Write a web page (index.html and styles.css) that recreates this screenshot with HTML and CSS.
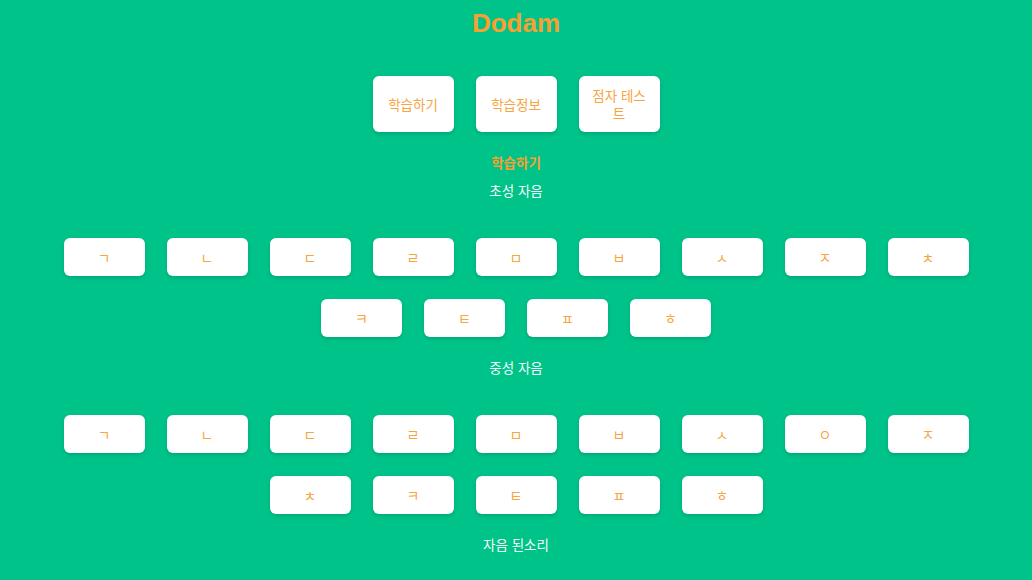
FILE: index.html
```html
<!DOCTYPE html>
<html lang="ko">
<head>
<meta charset="utf-8">
<title>Dodam</title>
<link rel="stylesheet" href="styles.css">
</head>
<body>
<h1 class="title">Dodam</h1>
<nav class="nav">
  <button class="nav-btn">학습하기</button>
  <button class="nav-btn">학습정보</button>
  <button class="nav-btn">점자 테스트</button>
</nav>
<h2 class="section-title">학습하기</h2>
<h3 class="group-title">초성 자음</h3>
<div class="keys">
  <button class="key">ㄱ</button>
  <button class="key">ㄴ</button>
  <button class="key">ㄷ</button>
  <button class="key">ㄹ</button>
  <button class="key">ㅁ</button>
  <button class="key">ㅂ</button>
  <button class="key">ㅅ</button>
  <button class="key">ㅈ</button>
  <button class="key">ㅊ</button>
  <button class="key">ㅋ</button>
  <button class="key">ㅌ</button>
  <button class="key">ㅍ</button>
  <button class="key">ㅎ</button>
</div>
<h3 class="group-title gap">중성 자음</h3>
<div class="keys">
  <button class="key">ㄱ</button>
  <button class="key">ㄴ</button>
  <button class="key">ㄷ</button>
  <button class="key">ㄹ</button>
  <button class="key">ㅁ</button>
  <button class="key">ㅂ</button>
  <button class="key">ㅅ</button>
  <button class="key">ㅇ</button>
  <button class="key">ㅈ</button>
  <button class="key">ㅊ</button>
  <button class="key">ㅋ</button>
  <button class="key">ㅌ</button>
  <button class="key">ㅍ</button>
  <button class="key">ㅎ</button>
</div>
<h3 class="group-title gap">자음 된소리</h3>
</body>
</html>
```
FILE: styles.css
```css
html, body {
  margin: 0;
  padding: 0;
}
body {
  background: #00c38a;
  font-family: "Liberation Sans", "Noto Sans CJK KR", sans-serif;
  text-align: center;
  overflow: hidden;
  height: 580px;
}
.title {
  margin: 8px 0 0;
  font-size: 26px;
  line-height: 30px;
  font-weight: bold;
  color: #f5a032;
}
.nav {
  display: flex;
  justify-content: center;
  gap: 22px;
  margin-top: 38px;
}
.nav-btn, .key {
  border: none;
  background: #ffffff;
  border-radius: 6px;
  box-shadow: 0 2px 4px rgba(0, 0, 0, 0.14);
  color: #f7a543;
  font-family: "Noto Sans CJK KR", sans-serif;
  padding: 0;
  cursor: pointer;
}
.nav-btn {
  width: 81px;
  height: 56px;
  padding: 0 10px;
  font-size: 13.5px;
  line-height: 18px;
}
.section-title {
  margin: 20px 0 0;
  font-family: "Noto Sans CJK KR", sans-serif;
  font-size: 13.5px;
  line-height: 20px;
  font-weight: bold;
  color: #f5a032;
}
.group-title {
  margin: 8px 0 0;
  font-family: "Noto Sans CJK KR", sans-serif;
  font-size: 13.5px;
  line-height: 20px;
  font-weight: normal;
  color: #f4fbf8;
}
.group-title.gap {
  margin-top: 20px;
}
.keys {
  display: flex;
  flex-wrap: wrap;
  justify-content: center;
  gap: 23px 22px;
  width: 905px;
  margin: 38px auto 0;
}
.key {
  width: 81px;
  height: 38px;
  font-size: 14px;
  line-height: 38px;
}
```
